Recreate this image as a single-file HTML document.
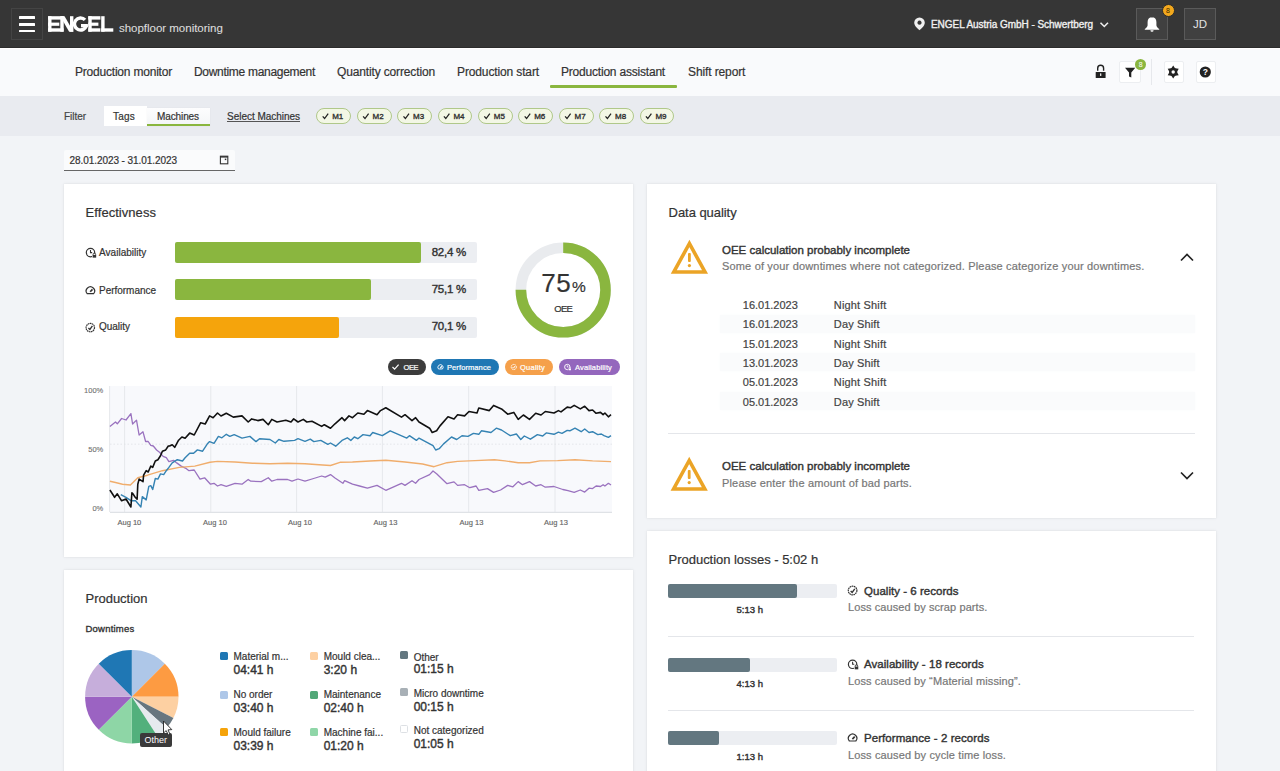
<!DOCTYPE html>
<html><head><meta charset="utf-8"><style>
html,body{margin:0;padding:0;width:1280px;height:771px;overflow:hidden;background:#f2f4f7;}
body{position:relative;font-family:'Liberation Sans', sans-serif;}
.t{position:absolute;white-space:nowrap;font-family:'Liberation Sans', sans-serif;}
</style></head><body>
<div style="position:absolute;left:0px;top:0px;width:1280px;height:48px;background:#363636"></div>
<div style="position:absolute;left:0px;top:47px;width:1280px;height:1px;background:#2c2c2c"></div>
<div style="position:absolute;left:0px;top:48px;width:1280px;height:1px;background:#ffffff"></div>
<div style="position:absolute;left:0px;top:49px;width:1280px;height:47px;background:#f9fafc"></div>
<div style="position:absolute;left:0px;top:96px;width:1280px;height:40px;background:#e9ebf0"></div>
<div style="position:absolute;left:11px;top:8px;width:32px;height:32px;box-sizing:border-box;border:1px solid #444;"></div>
<div style="position:absolute;left:18.5px;top:16px;width:16.5px;height:2.6px;background:#fff;border-radius:0.5px"></div>
<div style="position:absolute;left:18.5px;top:23px;width:16.5px;height:2.6px;background:#fff;border-radius:0.5px"></div>
<div style="position:absolute;left:18.5px;top:29.5px;width:16.5px;height:2.6px;background:#fff;border-radius:0.5px"></div>
<div style="position:absolute;left:1136px;top:8px;width:32px;height:32px;box-sizing:border-box;background:#404040;border:1px solid #5a5a5a;"></div>
<div style="position:absolute;left:1184px;top:8px;width:32px;height:32px;box-sizing:border-box;background:#404040;border:1px solid #5a5a5a;"></div>
<div style="position:absolute;left:1161.5px;top:4.3px;width:13px;height:13px;box-sizing:border-box;border-radius:50%;background:#f2a81d;border:1.2px solid #2b2b2b"></div>
<div style="position:absolute;left:550px;top:85.4px;width:126.5px;height:2.3px;background:#8ab63f;border-radius:1px"></div>
<div style="position:absolute;left:1119px;top:61px;width:22px;height:21.5px;box-sizing:border-box;background:#fff;border:1px solid #eceef1;border-radius:2px"></div>
<div style="position:absolute;left:1164px;top:61px;width:19.5px;height:21.5px;box-sizing:border-box;background:#fff;border:1px solid #eceef1;border-radius:2px"></div>
<div style="position:absolute;left:1196px;top:61px;width:19.5px;height:21.5px;box-sizing:border-box;background:#fff;border:1px solid #eceef1;border-radius:2px"></div>
<div style="position:absolute;left:1151px;top:59px;width:1px;height:26px;background:#e6e8ec"></div>
<div style="position:absolute;left:1135.1px;top:58.5px;width:11px;height:11px;border-radius:50%;background:#8ab63f;"></div>
<div style="position:absolute;left:103.5px;top:106px;width:43px;height:20px;background:#fff"></div>
<div style="position:absolute;left:146.5px;top:107.5px;width:63.5px;height:18.5px;background:linear-gradient(#fdfdfe,#f3f5f7);box-shadow:0 0 1px rgba(0,0,0,0.08)"></div>
<div style="position:absolute;left:147px;top:124px;width:63px;height:2px;background:#8ab63f"></div>
<div style="position:absolute;left:227px;top:121.3px;width:73px;height:1.2px;background:#555"></div>
<div style="position:absolute;left:316.4px;top:108.3px;width:34.8px;height:15.3px;box-sizing:border-box;border:1px solid #b0c88a;background:#f3f7e5;border-radius:8px"></div>
<div style="position:absolute;left:356.79999999999995px;top:108.3px;width:34.8px;height:15.3px;box-sizing:border-box;border:1px solid #b0c88a;background:#f3f7e5;border-radius:8px"></div>
<div style="position:absolute;left:397.2px;top:108.3px;width:34.8px;height:15.3px;box-sizing:border-box;border:1px solid #b0c88a;background:#f3f7e5;border-radius:8px"></div>
<div style="position:absolute;left:437.59999999999997px;top:108.3px;width:34.8px;height:15.3px;box-sizing:border-box;border:1px solid #b0c88a;background:#f3f7e5;border-radius:8px"></div>
<div style="position:absolute;left:478.0px;top:108.3px;width:34.8px;height:15.3px;box-sizing:border-box;border:1px solid #b0c88a;background:#f3f7e5;border-radius:8px"></div>
<div style="position:absolute;left:518.4px;top:108.3px;width:34.8px;height:15.3px;box-sizing:border-box;border:1px solid #b0c88a;background:#f3f7e5;border-radius:8px"></div>
<div style="position:absolute;left:558.8px;top:108.3px;width:34.8px;height:15.3px;box-sizing:border-box;border:1px solid #b0c88a;background:#f3f7e5;border-radius:8px"></div>
<div style="position:absolute;left:599.2px;top:108.3px;width:34.8px;height:15.3px;box-sizing:border-box;border:1px solid #b0c88a;background:#f3f7e5;border-radius:8px"></div>
<div style="position:absolute;left:639.5999999999999px;top:108.3px;width:34.8px;height:15.3px;box-sizing:border-box;border:1px solid #b0c88a;background:#f3f7e5;border-radius:8px"></div>
<div style="position:absolute;left:64px;top:150px;width:170.5px;height:20px;background:#fafbfc;border-radius:2px 2px 0 0"></div>
<div style="position:absolute;left:64px;top:169.5px;width:170.5px;height:1.1px;background:#666"></div>
<div style="position:absolute;left:64px;top:184px;width:569px;height:373px;background:#fff;box-shadow:0 0 0 0.5px rgba(0,0,0,0.03), 0 0 4px rgba(0,0,0,0.06);"></div>
<div style="position:absolute;left:647px;top:184px;width:569px;height:334px;background:#fff;box-shadow:0 0 0 0.5px rgba(0,0,0,0.03), 0 0 4px rgba(0,0,0,0.06);"></div>
<div style="position:absolute;left:64px;top:570px;width:569px;height:220px;background:#fff;box-shadow:0 0 0 0.5px rgba(0,0,0,0.03), 0 0 4px rgba(0,0,0,0.06);"></div>
<div style="position:absolute;left:647px;top:531px;width:569px;height:260px;background:#fff;box-shadow:0 0 0 0.5px rgba(0,0,0,0.03), 0 0 4px rgba(0,0,0,0.06);"></div>
<div style="position:absolute;left:175px;top:242px;width:302px;height:21px;background:#eceef2;border-radius:2px"></div>
<div style="position:absolute;left:175px;top:242px;width:246.3px;height:21px;background:#8ab63f;border-radius:2px"></div>
<div style="position:absolute;left:175px;top:279.3px;width:302px;height:21px;background:#eceef2;border-radius:2px"></div>
<div style="position:absolute;left:175px;top:279.3px;width:196px;height:21px;background:#8ab63f;border-radius:2px"></div>
<div style="position:absolute;left:175px;top:317px;width:302px;height:21px;background:#eceef2;border-radius:2px"></div>
<div style="position:absolute;left:175px;top:317px;width:163.5px;height:21px;background:#f5a40c;border-radius:2px"></div>
<div style="position:absolute;left:387.8px;top:359px;width:38.19999999999999px;height:16px;background:#3c3c3c;border-radius:8px"></div>
<div style="position:absolute;left:431px;top:359px;width:68.30000000000001px;height:16px;background:#1f77b4;border-radius:8px"></div>
<div style="position:absolute;left:504.5px;top:359px;width:48.5px;height:16px;background:#f5a04a;border-radius:8px"></div>
<div style="position:absolute;left:558.5px;top:359px;width:61.5px;height:16px;background:#9467bd;border-radius:8px"></div>
<div style="position:absolute;left:720px;top:314.5px;width:475px;height:18px;background:#fafbfc;box-shadow:0 0 3px #fafbfc"></div>
<div style="position:absolute;left:720px;top:353.2px;width:475px;height:18px;background:#fafbfc;box-shadow:0 0 3px #fafbfc"></div>
<div style="position:absolute;left:720px;top:391.9px;width:475px;height:18px;background:#fafbfc;box-shadow:0 0 3px #fafbfc"></div>
<div style="position:absolute;left:668px;top:432.5px;width:527px;height:1px;background:#e4e6ea"></div>
<div style="position:absolute;left:668px;top:584px;width:168.5px;height:14px;background:#eceef2;border-radius:2px"></div>
<div style="position:absolute;left:668px;top:584px;width:129.2px;height:14px;background:#637780;border-radius:2px"></div>
<div style="position:absolute;left:668px;top:657.5px;width:168.5px;height:14px;background:#eceef2;border-radius:2px"></div>
<div style="position:absolute;left:668px;top:657.5px;width:82px;height:14px;background:#637780;border-radius:2px"></div>
<div style="position:absolute;left:668px;top:731px;width:168.5px;height:14px;background:#eceef2;border-radius:2px"></div>
<div style="position:absolute;left:668px;top:731px;width:50.5px;height:14px;background:#637780;border-radius:2px"></div>
<div style="position:absolute;left:668px;top:636px;width:526px;height:1px;background:#e4e6ea"></div>
<div style="position:absolute;left:668px;top:710px;width:526px;height:1px;background:#e4e6ea"></div>
<div style="position:absolute;left:220px;top:652px;width:8px;height:8px;background:#1f77b4;border-radius:1.5px;"></div>
<div style="position:absolute;left:220px;top:690.5px;width:8px;height:8px;background:#aec7e8;border-radius:1.5px;"></div>
<div style="position:absolute;left:220px;top:728.4px;width:8px;height:8px;background:#f5a30a;border-radius:1.5px;"></div>
<div style="position:absolute;left:310px;top:652px;width:8px;height:8px;background:#fdd0a2;border-radius:1.5px;"></div>
<div style="position:absolute;left:310px;top:690.5px;width:8px;height:8px;background:#52a878;border-radius:1.5px;"></div>
<div style="position:absolute;left:310px;top:728.4px;width:8px;height:8px;background:#8fd6a8;border-radius:1.5px;"></div>
<div style="position:absolute;left:400px;top:651px;width:8px;height:8px;background:#637780;border-radius:1.5px;"></div>
<div style="position:absolute;left:400px;top:688px;width:8px;height:8px;background:#a8b0b6;border-radius:1.5px;"></div>
<div style="position:absolute;left:400px;top:725px;width:8px;height:8px;background:#fff;border-radius:1.5px;box-sizing:border-box;border:1px solid #dde0e4;"></div>
<svg width="1280" height="771" style="position:absolute;left:0;top:0"><circle cx="563.2" cy="290" r="42.3" fill="none" stroke="#e9ebee" stroke-width="10.6"/><circle cx="563.2" cy="290" r="42.3" fill="none" stroke="#8ab63f" stroke-width="10.6" stroke-dasharray="199.33 265.78" transform="rotate(-90 563.2 290)"/><path d="M131.8,696.8 L131.80,650.10 A46.7,46.7 0 0 1 164.82,663.78 Z" fill="#aec7e8"/><path d="M131.8,696.8 L164.82,663.78 A46.7,46.7 0 0 1 178.50,696.80 Z" fill="#fd9b42"/><path d="M131.8,696.8 L178.50,696.80 A46.7,46.7 0 0 1 173.41,718.00 Z" fill="#fdd0a2"/><path d="M131.8,696.8 L173.41,718.00 A46.7,46.7 0 0 1 166.50,728.05 Z" fill="#68767f"/><path d="M131.8,696.8 L166.50,728.05 A46.7,46.7 0 0 1 157.23,735.97 Z" fill="#e6eaee"/><path d="M131.8,696.8 L157.23,735.97 A46.7,46.7 0 0 1 131.80,743.50 Z" fill="#52b07c"/><path d="M131.8,696.8 L131.80,743.50 A46.7,46.7 0 0 1 98.78,729.82 Z" fill="#8ed6a6"/><path d="M131.8,696.8 L98.78,729.82 A46.7,46.7 0 0 1 85.10,696.80 Z" fill="#9b63c2"/><path d="M131.8,696.8 L85.10,696.80 A46.7,46.7 0 0 1 98.78,663.78 Z" fill="#c6aedb"/><path d="M131.8,696.8 L98.78,663.78 A46.7,46.7 0 0 1 131.80,650.10 Z" fill="#1f77b4"/><rect x="110" y="386" width="502" height="126" fill="#f8f9fc"/><line x1="124.6" y1="386" x2="124.6" y2="512" stroke="#e6e8ec" stroke-width="1"/><line x1="210.8" y1="386" x2="210.8" y2="512" stroke="#e6e8ec" stroke-width="1"/><line x1="296.6" y1="386" x2="296.6" y2="512" stroke="#e6e8ec" stroke-width="1"/><line x1="382.4" y1="386" x2="382.4" y2="512" stroke="#e6e8ec" stroke-width="1"/><line x1="468.7" y1="386" x2="468.7" y2="512" stroke="#e6e8ec" stroke-width="1"/><line x1="555" y1="386" x2="555" y2="512" stroke="#e6e8ec" stroke-width="1"/><line x1="110" y1="444.2" x2="612" y2="444.2" stroke="#dfe2e6" stroke-width="0.8" stroke-dasharray="1.5 2"/><line x1="110" y1="512.3" x2="612" y2="512.3" stroke="#dfe2e6" stroke-width="1.2"/><line x1="109.6" y1="386" x2="109.6" y2="512" stroke="#e6e8ec" stroke-width="1"/><path d="M109.9,426.4 L115.5,422.0 L117.3,423.8 L121.6,418.5 L126.0,420.0 L130.9,413.6 L132.6,424.0 L136.5,420.1 L139.1,435.0 L143.0,431.8 L145.6,441.5 L148.2,441.5 L150.8,445.4 L153.3,446.0 L156.6,450.0 L159.8,452.5 L163.1,456.4 L166.3,457.7 L168.9,461.6 L173.5,460.3 L176.7,462.9 L181.2,466.1 L186.4,468.7 L189.0,470.7 L194.2,470.0 L200.0,479.1 L204.6,477.8 L210.5,484.2 L214.0,483.3 L217.5,486.0 L221.0,484.7 L226.3,486.3 L235.0,483.3 L242.0,484.2 L248.2,479.5 L250.8,481.2 L261.3,481.6 L268.3,477.7 L271.8,481.2 L277.0,479.5 L287.6,479.5 L292.0,481.2 L298.0,479.0 L305.0,481.2 L312.0,479.0 L321.7,476.0 L325.2,477.2 L330.5,474.6 L335.0,478.0 L342.9,483.3 L344.6,480.7 L352.5,484.2 L359.5,486.0 L367.4,488.2 L377.0,485.4 L385.8,490.3 L401.5,483.3 L405.0,485.4 L412.0,480.7 L415.6,483.3 L419.0,479.5 L429.6,474.6 L433.0,471.0 L436.6,473.7 L447.0,483.7 L454.0,481.9 L457.6,485.4 L464.6,484.7 L469.8,487.7 L476.1,486.0 L478.8,490.3 L487.5,488.6 L493.6,492.4 L500.6,490.0 L507.7,485.4 L512.9,486.8 L518.2,481.6 L522.5,484.7 L529.5,481.6 L535.7,486.0 L541.0,484.7 L545.3,487.2 L554.0,486.5 L562.8,489.5 L568.0,490.7 L574.2,492.4 L580.3,490.0 L584.7,492.1 L589.0,488.2 L592.6,488.6 L596.1,486.0 L600.5,486.5 L603.1,484.7 L604.9,486.0 L608.4,483.3 L611.0,485.0" fill="none" stroke="#9a72bf" stroke-width="1.3" stroke-linejoin="round"/><path d="M109.9,481.2 L115.5,482.5 L122.5,484.2 L130.4,485.0 L137.8,477.8 L147.5,475.2 L162.4,470.7 L179.3,467.4 L194.8,466.1 L210.0,462.3 L217.5,461.4 L235.0,462.0 L252.5,463.2 L270.0,463.7 L287.6,463.2 L305.0,463.7 L322.6,465.0 L330.5,465.5 L340.0,462.3 L352.5,462.0 L370.0,461.0 L385.8,460.2 L405.0,462.0 L422.6,464.0 L434.0,466.7 L447.0,462.7 L457.6,461.4 L475.0,460.6 L494.5,459.7 L505.0,460.9 L518.2,462.7 L529.5,462.7 L540.0,460.9 L557.6,460.6 L575.0,459.7 L592.6,460.9 L611.0,461.6" fill="none" stroke="#f0ad6c" stroke-width="1.4" stroke-linejoin="round"/><path d="M120.8,494.7 L126.0,497.3 L131.3,500.8 L135.6,500.8 L140.9,507.0 L142.3,496.6 L146.2,499.9 L148.8,486.3 L150.8,485.6 L152.7,489.5 L155.3,478.5 L157.9,479.1 L160.5,473.9 L163.7,474.6 L166.3,470.7 L168.9,467.4 L172.2,462.9 L177.3,459.7 L182.5,461.0 L185.1,457.7 L189.7,453.2 L193.6,453.2 L197.4,449.9 L202.6,451.2 L207.2,444.1 L209.6,441.6 L214.0,443.4 L218.4,436.4 L221.9,437.8 L226.3,434.3 L229.8,436.4 L234.2,434.6 L242.0,438.1 L249.9,436.4 L256.0,441.6 L259.5,438.7 L270.0,439.5 L275.3,443.0 L278.8,439.5 L284.0,441.3 L294.6,440.4 L298.0,438.7 L305.0,441.3 L310.3,439.2 L313.8,441.6 L320.8,440.4 L327.8,444.4 L330.5,443.0 L335.7,446.2 L342.0,440.4 L347.3,437.8 L350.8,440.4 L354.3,437.0 L357.8,438.7 L363.0,434.6 L370.0,435.7 L372.7,432.5 L382.3,435.7 L390.2,430.8 L406.8,438.1 L409.4,435.7 L416.4,440.4 L419.0,438.1 L433.0,445.7 L435.7,450.0 L439.2,448.7 L443.6,443.9 L451.5,437.0 L456.7,439.5 L462.0,435.7 L468.0,436.4 L473.4,433.4 L478.8,434.3 L481.4,430.8 L491.0,432.5 L496.3,428.2 L501.5,430.0 L510.3,435.7 L516.4,434.0 L520.8,439.5 L524.3,436.0 L530.4,439.2 L537.4,434.6 L542.7,436.0 L546.2,432.9 L554.0,434.3 L558.4,432.2 L562.0,433.4 L567.2,430.4 L569.8,430.8 L575.0,428.2 L581.2,431.7 L584.7,429.0 L589.0,432.5 L592.6,431.7 L597.8,434.6 L601.3,434.0 L604.0,435.7 L608.4,437.4 L611.0,435.7" fill="none" stroke="#3583b3" stroke-width="1.4" stroke-linejoin="round"/><path d="M109.9,490.0 L114.6,497.3 L117.3,493.8 L121.6,500.8 L126.0,499.0 L130.9,507.0 L131.9,492.7 L133.0,493.8 L135.0,497.0 L137.1,499.2 L137.8,484.3 L139.1,479.1 L143.0,481.7 L143.6,475.2 L146.2,470.7 L148.2,472.0 L150.8,466.1 L152.7,467.4 L155.3,461.0 L157.9,459.7 L160.5,455.8 L162.4,451.2 L165.7,449.9 L168.3,446.0 L169.6,446.0 L172.2,444.7 L174.7,447.3 L178.6,440.2 L181.9,437.0 L185.1,438.3 L189.7,433.1 L194.2,435.0 L200.7,422.7 L205.2,424.0 L209.6,415.9 L213.1,417.7 L217.5,413.0 L221.0,416.0 L226.3,413.3 L233.3,417.1 L242.0,415.9 L248.2,422.0 L251.7,418.9 L257.8,420.6 L263.0,419.4 L268.3,424.7 L271.8,419.4 L277.0,422.0 L285.8,420.3 L291.0,422.0 L293.7,418.9 L298.0,422.0 L303.3,419.4 L306.8,422.0 L312.0,421.2 L321.7,426.4 L324.3,424.7 L330.5,428.2 L335.0,423.8 L342.0,417.7 L344.6,420.6 L349.0,415.9 L352.5,417.7 L357.8,413.0 L363.9,414.2 L367.4,410.6 L377.0,414.7 L380.5,410.6 L385.8,407.7 L401.5,417.1 L405.0,414.7 L412.0,420.6 L415.6,417.7 L419.0,422.0 L429.6,428.2 L432.2,432.5 L436.6,430.8 L440.0,425.9 L448.0,416.8 L454.0,418.9 L457.6,414.7 L464.6,415.9 L469.0,411.5 L477.0,413.0 L478.8,408.0 L489.3,410.6 L493.6,405.4 L501.5,408.9 L507.7,414.2 L513.8,412.4 L518.2,419.4 L523.4,415.0 L529.5,419.4 L535.7,413.3 L541.0,415.0 L545.3,411.5 L554.0,413.0 L558.4,410.6 L561.0,411.9 L567.2,407.1 L570.7,407.7 L574.2,405.4 L580.3,408.9 L584.7,406.3 L589.0,410.6 L592.6,410.0 L596.1,413.3 L600.5,412.4 L603.1,414.7 L604.9,413.0 L608.4,416.8 L611.0,414.7" fill="none" stroke="#111" stroke-width="1.6" stroke-linejoin="round"/></svg>
<svg width="1280" height="771" style="position:absolute;left:0;top:0">
<!-- ENGEL logo -->
<g fill="#fff">
<rect x="48.1" y="16.2" width="3.4" height="15.5"/>
<rect x="48.1" y="16.2" width="15.5" height="3.4"/>
<rect x="48.1" y="22.6" width="11.2" height="3.2"/>
<rect x="48.1" y="28.3" width="15.5" height="3.4"/>
<rect x="60.3" y="16.2" width="3.4" height="15.5"/>
<path d="M60.3,16.2 L64.6,16.2 L73.4,31.7 L69.1,31.7 Z"/>
<rect x="70" y="16.2" width="3.4" height="15.5"/>
<rect x="81" y="24" width="6.9" height="3.3"/>
<rect x="88.3" y="16.2" width="3.4" height="15.5"/>
<rect x="88.3" y="16.2" width="12.1" height="3.4"/>
<rect x="88.3" y="22.6" width="10.1" height="3.2"/>
<rect x="88.3" y="28.3" width="12.1" height="3.4"/>
<rect x="101.2" y="16.2" width="3.4" height="15.5"/>
<rect x="101.2" y="28.3" width="12.1" height="3.4"/>
</g>
<path d="M86.42,25.26 A6.05,6.05 0 1 1 85.00,19.95" fill="none" stroke="#fff" stroke-width="3.4"/>
<!-- location pin -->
<path d="M919.5,17.5 a5.3,5.3 0 0 1 5.3,5.3 c0,3.6 -5.3,7.5 -5.3,7.5 c0,0 -5.3,-3.9 -5.3,-7.5 a5.3,5.3 0 0 1 5.3,-5.3 z M919.5,20.6 a2.1,2.1 0 1 0 0.01,0 z" fill="#f0f0f0" fill-rule="evenodd"/>
<!-- chevron down header -->
<path d="M1100.5,22.8 L1104.3,26.5 L1108,22.8" fill="none" stroke="#eee" stroke-width="1.6"/>
<!-- bell -->
<path d="M1152,17 c-2.8,0 -4.4,2.2 -4.4,5 v3.2 c0,1.5 -1.4,2.7 -2.8,3.7 v0.8 h14.4 v-0.8 c-1.4,-1 -2.8,-2.2 -2.8,-3.7 v-3.2 c0,-2.8 -1.6,-5 -4.4,-5 z M1150.4,30.2 h3.2 a1.6,1.6 0 0 1 -3.2,0 z" fill="#fff"/>
<!-- lock -->
<path d="M1097.7,70.8 v-2.6 a2.95,2.95 0 0 1 5.9,0 v2.6" fill="none" stroke="#222" stroke-width="1.4"/>
<rect x="1095.7" y="72" width="9.9" height="5.9" rx="0.5" fill="#222"/>
<rect x="1100.1" y="73.3" width="1.2" height="2.6" rx="0.5" fill="#fff"/>
<!-- funnel -->
<path d="M1125,67.8 h10.3 l-4,4.6 v5.2 l-2.3,-1.2 v-4 z" fill="#222"/>
<!-- gear -->
<g transform="translate(1173.2,72) scale(1.15)">
<path d="M0,-5.6 L1.6,-3.2 L4.8,-2.8 L3.2,0 L4.8,2.8 L1.6,3.2 L0,5.6 L-1.6,3.2 L-4.8,2.8 L-3.2,0 L-4.8,-2.8 L-1.6,-3.2 Z" fill="#222"/>
<circle r="3.5" fill="#222"/><circle r="1.5" fill="#fff"/>
</g>
<!-- help -->
<circle cx="1205.3" cy="72" r="5.6" fill="#222"/>
<text x="1205.3" y="75.3" font-family="Liberation Sans" font-weight="bold" font-size="8.5" fill="#fff" text-anchor="middle">?</text>
<!-- badges text -->
<text x="1168" y="13.3" font-family="Liberation Sans" font-size="7" fill="#3a2a00" text-anchor="middle">8</text>
<text x="1140.6" y="66.5" font-family="Liberation Sans" font-size="7" fill="#fff" text-anchor="middle">8</text>
<!-- calendar icon -->
<rect x="220.4" y="156.2" width="7.4" height="7.6" fill="none" stroke="#333" stroke-width="1.1"/>
<rect x="220.4" y="156.2" width="7.4" height="1.4" fill="#333"/>
<rect x="224.8" y="158.6" width="1.5" height="1.5" fill="#333"/>
<!-- chip checks -->
<g id="chips"><path d="M322.7,116.3 L324.6,118.5 L328.2,113.6" fill="none" stroke="#222" stroke-width="1.25"/><text x="332.2" y="118.9" font-family="Liberation Sans" font-size="8" fill="#333" stroke="#333" stroke-width="0.35">M1</text><path d="M363.1,116.3 L365.0,118.5 L368.6,113.6" fill="none" stroke="#222" stroke-width="1.25"/><text x="372.6" y="118.9" font-family="Liberation Sans" font-size="8" fill="#333" stroke="#333" stroke-width="0.35">M2</text><path d="M403.5,116.3 L405.4,118.5 L409.0,113.6" fill="none" stroke="#222" stroke-width="1.25"/><text x="413.0" y="118.9" font-family="Liberation Sans" font-size="8" fill="#333" stroke="#333" stroke-width="0.35">M3</text><path d="M443.9,116.3 L445.8,118.5 L449.4,113.6" fill="none" stroke="#222" stroke-width="1.25"/><text x="453.4" y="118.9" font-family="Liberation Sans" font-size="8" fill="#333" stroke="#333" stroke-width="0.35">M4</text><path d="M484.3,116.3 L486.2,118.5 L489.8,113.6" fill="none" stroke="#222" stroke-width="1.25"/><text x="493.8" y="118.9" font-family="Liberation Sans" font-size="8" fill="#333" stroke="#333" stroke-width="0.35">M5</text><path d="M524.7,116.3 L526.6,118.5 L530.2,113.6" fill="none" stroke="#222" stroke-width="1.25"/><text x="534.2" y="118.9" font-family="Liberation Sans" font-size="8" fill="#333" stroke="#333" stroke-width="0.35">M6</text><path d="M565.1,116.3 L567.0,118.5 L570.6,113.6" fill="none" stroke="#222" stroke-width="1.25"/><text x="574.6" y="118.9" font-family="Liberation Sans" font-size="8" fill="#333" stroke="#333" stroke-width="0.35">M7</text><path d="M605.5,116.3 L607.4,118.5 L611.0,113.6" fill="none" stroke="#222" stroke-width="1.25"/><text x="615.0" y="118.9" font-family="Liberation Sans" font-size="8" fill="#333" stroke="#333" stroke-width="0.35">M8</text><path d="M645.9,116.3 L647.8,118.5 L651.4,113.6" fill="none" stroke="#222" stroke-width="1.25"/><text x="655.4" y="118.9" font-family="Liberation Sans" font-size="8" fill="#333" stroke="#333" stroke-width="0.35">M9</text><circle cx="90.5" cy="252.6" r="4.2" fill="none" stroke="#333" stroke-width="1.2"/><path d="M90.5,250.08 V252.60 H92.18" fill="none" stroke="#333" stroke-width="1.08"/><rect x="91.97" y="253.65" width="4.62" height="4.20" fill="#fff"/><rect x="92.60" y="254.91" width="3.57" height="2.73" fill="#333"/><path d="M93.10,255.12 v-0.84 a1.26,1.26 0 0 1 2.52,0 v0.84" fill="none" stroke="#333" stroke-width="0.84"/><path d="M87.18,293.70 A4.2,4.2 0 1 1 93.62,293.70 Z" fill="none" stroke="#333" stroke-width="1.2"/><path d="M90.20,291.80 L92.50,289.32" stroke="#333" stroke-width="1.68"/><circle cx="90.3" cy="327.6" r="4.2" fill="none" stroke="#333" stroke-width="1.2" stroke-dasharray="1.6 0.5"/><path d="M88.41,328.02 L89.88,329.49 L92.40,325.92" fill="none" stroke="#333" stroke-width="1.32"/><path d="M392.5,367 L394.6,369.2 L398.6,364.6" fill="none" stroke="#fff" stroke-width="1.2"/><path d="M438.51,368.97 A2.6,2.6 0 1 1 442.49,368.97 Z" fill="none" stroke="#fff" stroke-width="0.9"/><path d="M440.30,368.10 L441.80,366.26" stroke="#fff" stroke-width="1.26"/><circle cx="513.8" cy="367" r="2.6" fill="none" stroke="#fff" stroke-width="0.9" stroke-dasharray="1.6 0.5"/><path d="M512.63,367.26 L513.54,368.17 L515.10,365.96" fill="none" stroke="#fff" stroke-width="0.9900000000000001"/><circle cx="567.3" cy="367" r="2.7" fill="none" stroke="#fff" stroke-width="0.9"/><path d="M567.3,365.38 V367.00 H568.38" fill="none" stroke="#fff" stroke-width="0.81"/><rect x="568.25" y="367.68" width="2.97" height="2.70" fill="#9467bd"/><rect x="568.65" y="368.49" width="2.29" height="1.76" fill="#fff"/><path d="M568.97,368.62 v-0.54 a0.81,0.81 0 0 1 1.62,0 v0.54" fill="none" stroke="#fff" stroke-width="0.63"/><circle cx="852.6" cy="590.5" r="4.3" fill="none" stroke="#333" stroke-width="1.2" stroke-dasharray="1.6 0.5"/><path d="M850.67,590.93 L852.17,592.43 L854.75,588.78" fill="none" stroke="#333" stroke-width="1.32"/><circle cx="852.6" cy="664.3" r="4.2" fill="none" stroke="#333" stroke-width="1.2"/><path d="M852.6,661.78 V664.30 H854.28" fill="none" stroke="#333" stroke-width="1.08"/><rect x="854.07" y="665.35" width="4.62" height="4.20" fill="#fff"/><rect x="854.70" y="666.61" width="3.57" height="2.73" fill="#333"/><path d="M855.20,666.82 v-0.84 a1.26,1.26 0 0 1 2.52,0 v0.84" fill="none" stroke="#333" stroke-width="0.84"/><path d="M849.38,741.00 A4.2,4.2 0 1 1 855.82,741.00 Z" fill="none" stroke="#333" stroke-width="1.2"/><path d="M852.40,739.10 L854.70,736.62" stroke="#333" stroke-width="1.68"/></g>
<!-- warning triangles -->
<g fill="none" stroke="#eba426" stroke-width="3.6" stroke-linejoin="miter">
<path d="M689.4,243.5 L673.8,272 L705,272 Z"/>
<path d="M689.2,460.5 L673.6,489 L704.8,489 Z"/>
</g>
<g fill="#eba426">
<rect x="688" y="253" width="2.8" height="9" rx="1"/><circle cx="689.4" cy="265.6" r="1.6"/>
<rect x="687.8" y="470" width="2.8" height="9" rx="1"/><circle cx="689.2" cy="482.6" r="1.6"/>
</g>
<!-- chevrons -->
<path d="M1181,260.5 L1187,254.5 L1193,260.5" fill="none" stroke="#222" stroke-width="1.7"/>
<path d="M1181,472.5 L1187,478.5 L1193,472.5" fill="none" stroke="#222" stroke-width="1.7"/>
</svg>

<div style="position:absolute;left:139.6px;top:732.8px;width:32.2px;height:14.2px;background:#3a3a3a;border-radius:2px"></div>
<div class="t" style="top:23.00px;font-size:11.5px;line-height:11.5px;color:#dcdcdc;font-weight:400;letter-spacing:-0.010px;left:118.90px;-webkit-text-stroke:0.1px #dcdcdc;">shopfloor monitoring</div>
<div class="t" style="top:20.00px;font-size:10px;line-height:10px;color:#f0f0f0;font-weight:400;letter-spacing:-0.049px;left:931.00px;-webkit-text-stroke:0.35px #f0f0f0;">ENGEL Austria GmbH - Schwertberg</div>
<div class="t" style="top:19.00px;font-size:11.5px;line-height:11.5px;color:#e2e2e2;font-weight:400;left:1192.97px;">JD</div>
<div class="t" style="top:66.00px;font-size:12px;line-height:12px;color:#333;font-weight:400;letter-spacing:-0.207px;left:75.00px;-webkit-text-stroke:0.2px #333;">Production monitor</div>
<div class="t" style="top:66.00px;font-size:12px;line-height:12px;color:#333;font-weight:400;letter-spacing:-0.302px;left:194.00px;-webkit-text-stroke:0.2px #333;">Downtime management</div>
<div class="t" style="top:66.00px;font-size:12px;line-height:12px;color:#333;font-weight:400;letter-spacing:-0.143px;left:337.00px;-webkit-text-stroke:0.2px #333;">Quantity correction</div>
<div class="t" style="top:66.00px;font-size:12px;line-height:12px;color:#333;font-weight:400;letter-spacing:-0.128px;left:457.00px;-webkit-text-stroke:0.2px #333;">Production start</div>
<div class="t" style="top:66.00px;font-size:12px;line-height:12px;color:#333;font-weight:400;letter-spacing:-0.203px;left:561.00px;-webkit-text-stroke:0.2px #333;">Production assistant</div>
<div class="t" style="top:66.00px;font-size:12px;line-height:12px;color:#333;font-weight:400;letter-spacing:-0.117px;left:688.00px;-webkit-text-stroke:0.2px #333;">Shift report</div>
<div class="t" style="top:112.00px;font-size:10px;line-height:10px;color:#444;font-weight:400;letter-spacing:-0.039px;left:64.00px;-webkit-text-stroke:0.2px #444;">Filter</div>
<div class="t" style="top:112.00px;font-size:10px;line-height:10px;color:#333;font-weight:400;letter-spacing:0.219px;left:113.00px;-webkit-text-stroke:0.2px #333;">Tags</div>
<div class="t" style="top:112.00px;font-size:10px;line-height:10px;color:#333;font-weight:400;letter-spacing:-0.102px;left:157.00px;-webkit-text-stroke:0.2px #333;">Machines</div>
<div class="t" style="top:112.00px;font-size:10px;line-height:10px;color:#333;font-weight:400;letter-spacing:-0.025px;left:227.00px;-webkit-text-stroke:0.2px #333;">Select Machines</div>
<div class="t" style="top:156.00px;font-size:10px;line-height:10px;color:#333;font-weight:400;letter-spacing:-0.065px;left:69.50px;-webkit-text-stroke:0.2px #333;">28.01.2023 - 31.01.2023</div>
<div class="t" style="top:206.00px;font-size:13px;line-height:13px;color:#333;font-weight:400;letter-spacing:0.045px;left:85.60px;-webkit-text-stroke:0.2px #333;">Effectivness</div>
<div class="t" style="top:248.00px;font-size:10px;line-height:10px;color:#333;font-weight:400;letter-spacing:0.028px;left:99.00px;-webkit-text-stroke:0.2px #333;">Availability</div>
<div class="t" style="top:286.00px;font-size:10px;line-height:10px;color:#333;font-weight:400;letter-spacing:-0.023px;left:99.00px;-webkit-text-stroke:0.2px #333;">Performance</div>
<div class="t" style="top:322.00px;font-size:10px;line-height:10px;color:#333;font-weight:400;letter-spacing:-0.018px;left:99.00px;-webkit-text-stroke:0.2px #333;">Quality</div>
<div class="t" style="top:247.00px;font-size:11.5px;line-height:11.5px;color:#333;font-weight:400;letter-spacing:-0.252px;left:431.70px;-webkit-text-stroke:0.4px #333;">82,4 %</div>
<div class="t" style="top:284.00px;font-size:11.5px;line-height:11.5px;color:#333;font-weight:400;letter-spacing:-0.252px;left:431.70px;-webkit-text-stroke:0.4px #333;">75,1 %</div>
<div class="t" style="top:321.00px;font-size:11.5px;line-height:11.5px;color:#333;font-weight:400;letter-spacing:-0.252px;left:431.70px;-webkit-text-stroke:0.4px #333;">70,1 %</div>
<div class="t" style="top:270.00px;font-size:26px;line-height:26px;color:#333;font-weight:400;letter-spacing:0.539px;left:541.30px;-webkit-text-stroke:0.2px #333;">75</div>
<div class="t" style="top:279.00px;font-size:15.5px;line-height:15.5px;color:#333;font-weight:400;left:572.00px;-webkit-text-stroke:0.2px #333;">%</div>
<div class="t" style="top:304.00px;font-size:9.5px;line-height:9.5px;color:#333;font-weight:400;letter-spacing:-0.754px;left:554.30px;-webkit-text-stroke:0.2px #333;">OEE</div>
<div class="t" style="top:387.00px;font-size:7.5px;line-height:7.5px;color:#707070;font-weight:400;left:84.11px;-webkit-text-stroke:0.1px #707070;">100%</div>
<div class="t" style="top:446.00px;font-size:7.5px;line-height:7.5px;color:#707070;font-weight:400;left:88.28px;-webkit-text-stroke:0.1px #707070;">50%</div>
<div class="t" style="top:505.00px;font-size:7.5px;line-height:7.5px;color:#707070;font-weight:400;left:92.46px;-webkit-text-stroke:0.1px #707070;">0%</div>
<div class="t" style="top:519.00px;font-size:7.5px;line-height:7.5px;color:#666;font-weight:400;left:117.51px;-webkit-text-stroke:0.15px #666;">Aug 10</div>
<div class="t" style="top:519.00px;font-size:7.5px;line-height:7.5px;color:#666;font-weight:400;left:203.11px;-webkit-text-stroke:0.15px #666;">Aug 10</div>
<div class="t" style="top:519.00px;font-size:7.5px;line-height:7.5px;color:#666;font-weight:400;left:288.11px;-webkit-text-stroke:0.15px #666;">Aug 10</div>
<div class="t" style="top:519.00px;font-size:7.5px;line-height:7.5px;color:#666;font-weight:400;left:373.61px;-webkit-text-stroke:0.15px #666;">Aug 13</div>
<div class="t" style="top:519.00px;font-size:7.5px;line-height:7.5px;color:#666;font-weight:400;left:459.61px;-webkit-text-stroke:0.15px #666;">Aug 13</div>
<div class="t" style="top:519.00px;font-size:7.5px;line-height:7.5px;color:#666;font-weight:400;left:544.11px;-webkit-text-stroke:0.15px #666;">Aug 13</div>
<div class="t" style="top:364.00px;font-size:7.5px;line-height:7.5px;color:#fff;font-weight:400;letter-spacing:-0.448px;left:403.50px;-webkit-text-stroke:0.2px #fff;">OEE</div>
<div class="t" style="top:364.00px;font-size:7.5px;line-height:7.5px;color:#fff;font-weight:400;letter-spacing:0.097px;left:447.00px;-webkit-text-stroke:0.2px #fff;">Performance</div>
<div class="t" style="top:364.00px;font-size:7.5px;line-height:7.5px;color:#fff;font-weight:400;letter-spacing:0.237px;left:520.00px;-webkit-text-stroke:0.2px #fff;">Quality</div>
<div class="t" style="top:364.00px;font-size:7.5px;line-height:7.5px;color:#fff;font-weight:400;letter-spacing:0.142px;left:575.00px;-webkit-text-stroke:0.2px #fff;">Availability</div>
<div class="t" style="top:206.00px;font-size:13px;line-height:13px;color:#333;font-weight:400;letter-spacing:-0.055px;left:668.60px;-webkit-text-stroke:0.2px #333;">Data quality</div>
<div class="t" style="top:245.00px;font-size:11.5px;line-height:11.5px;color:#333;font-weight:400;letter-spacing:0.002px;left:722.00px;-webkit-text-stroke:0.4px #333;">OEE calculation probably incomplete</div>
<div class="t" style="top:261.00px;font-size:11px;line-height:11px;color:#777;font-weight:400;letter-spacing:0.169px;left:722.00px;-webkit-text-stroke:0.2px #777;">Some of your downtimes where not categorized. Please categorize your downtimes.</div>
<div class="t" style="top:300.00px;font-size:11px;line-height:11px;color:#444;font-weight:400;letter-spacing:-0.006px;left:742.80px;-webkit-text-stroke:0.2px #444;">16.01.2023</div>
<div class="t" style="top:300.00px;font-size:11px;line-height:11px;color:#444;font-weight:400;letter-spacing:0.168px;left:833.80px;-webkit-text-stroke:0.2px #444;">Night Shift</div>
<div class="t" style="top:319.00px;font-size:11px;line-height:11px;color:#444;font-weight:400;letter-spacing:-0.006px;left:742.80px;-webkit-text-stroke:0.2px #444;">16.01.2023</div>
<div class="t" style="top:319.00px;font-size:11px;line-height:11px;color:#444;font-weight:400;letter-spacing:0.151px;left:833.80px;-webkit-text-stroke:0.2px #444;">Day Shift</div>
<div class="t" style="top:339.00px;font-size:11px;line-height:11px;color:#444;font-weight:400;letter-spacing:-0.006px;left:742.80px;-webkit-text-stroke:0.2px #444;">15.01.2023</div>
<div class="t" style="top:339.00px;font-size:11px;line-height:11px;color:#444;font-weight:400;letter-spacing:0.168px;left:833.80px;-webkit-text-stroke:0.2px #444;">Night Shift</div>
<div class="t" style="top:358.00px;font-size:11px;line-height:11px;color:#444;font-weight:400;letter-spacing:-0.006px;left:742.80px;-webkit-text-stroke:0.2px #444;">13.01.2023</div>
<div class="t" style="top:358.00px;font-size:11px;line-height:11px;color:#444;font-weight:400;letter-spacing:0.151px;left:833.80px;-webkit-text-stroke:0.2px #444;">Day Shift</div>
<div class="t" style="top:377.00px;font-size:11px;line-height:11px;color:#444;font-weight:400;letter-spacing:-0.006px;left:742.80px;-webkit-text-stroke:0.2px #444;">05.01.2023</div>
<div class="t" style="top:377.00px;font-size:11px;line-height:11px;color:#444;font-weight:400;letter-spacing:0.168px;left:833.80px;-webkit-text-stroke:0.2px #444;">Night Shift</div>
<div class="t" style="top:397.00px;font-size:11px;line-height:11px;color:#444;font-weight:400;letter-spacing:-0.006px;left:742.80px;-webkit-text-stroke:0.2px #444;">05.01.2023</div>
<div class="t" style="top:397.00px;font-size:11px;line-height:11px;color:#444;font-weight:400;letter-spacing:0.151px;left:833.80px;-webkit-text-stroke:0.2px #444;">Day Shift</div>
<div class="t" style="top:461.00px;font-size:11.5px;line-height:11.5px;color:#333;font-weight:400;letter-spacing:0.002px;left:722.00px;-webkit-text-stroke:0.4px #333;">OEE calculation probably incomplete</div>
<div class="t" style="top:478.00px;font-size:11px;line-height:11px;color:#777;font-weight:400;letter-spacing:0.160px;left:722.00px;-webkit-text-stroke:0.2px #777;">Please enter the amount of bad parts.</div>
<div class="t" style="top:553.00px;font-size:13px;line-height:13px;color:#333;font-weight:400;letter-spacing:-0.031px;left:668.60px;-webkit-text-stroke:0.2px #333;">Production losses - 5:02 h</div>
<div class="t" style="top:586.00px;font-size:11.5px;line-height:11.5px;color:#333;font-weight:400;letter-spacing:0.029px;left:864.00px;-webkit-text-stroke:0.4px #333;">Quality - 6 records</div>
<div class="t" style="top:602.00px;font-size:11px;line-height:11px;color:#777;font-weight:400;letter-spacing:0.094px;left:848.00px;-webkit-text-stroke:0.2px #777;">Loss caused by scrap parts.</div>
<div class="t" style="top:605.00px;font-size:9.5px;line-height:9.5px;color:#333;font-weight:400;left:736.59px;-webkit-text-stroke:0.4px #333;">5:13 h</div>
<div class="t" style="top:659.00px;font-size:11.5px;line-height:11.5px;color:#333;font-weight:400;letter-spacing:0.041px;left:864.00px;-webkit-text-stroke:0.4px #333;">Availability - 18 records</div>
<div class="t" style="top:676.00px;font-size:11px;line-height:11px;color:#777;font-weight:400;letter-spacing:0.108px;left:848.00px;-webkit-text-stroke:0.2px #777;">Loss caused by “Material missing”.</div>
<div class="t" style="top:679.00px;font-size:9.5px;line-height:9.5px;color:#333;font-weight:400;left:736.59px;-webkit-text-stroke:0.4px #333;">4:13 h</div>
<div class="t" style="top:733.00px;font-size:11.5px;line-height:11.5px;color:#333;font-weight:400;letter-spacing:0.065px;left:864.00px;-webkit-text-stroke:0.4px #333;">Performance - 2 records</div>
<div class="t" style="top:750.00px;font-size:11px;line-height:11px;color:#777;font-weight:400;letter-spacing:0.127px;left:848.00px;-webkit-text-stroke:0.2px #777;">Loss caused by cycle time loss.</div>
<div class="t" style="top:752.00px;font-size:9.5px;line-height:9.5px;color:#333;font-weight:400;left:736.59px;-webkit-text-stroke:0.4px #333;">1:13 h</div>
<div class="t" style="top:592.00px;font-size:13px;line-height:13px;color:#333;font-weight:400;letter-spacing:-0.016px;left:85.50px;-webkit-text-stroke:0.2px #333;">Production</div>
<div class="t" style="top:624.00px;font-size:9.5px;line-height:9.5px;color:#333;font-weight:400;letter-spacing:0.222px;left:85.50px;-webkit-text-stroke:0.35px #333;">Downtimes</div>
<div class="t" style="top:652.00px;font-size:10px;line-height:10px;color:#333;font-weight:400;left:233.50px;-webkit-text-stroke:0.2px #333;">Material m...</div>
<div class="t" style="top:664.00px;font-size:12px;line-height:12px;color:#333;font-weight:400;left:233.50px;-webkit-text-stroke:0.4px #333;">04:41 h</div>
<div class="t" style="top:690.00px;font-size:10px;line-height:10px;color:#333;font-weight:400;left:233.50px;-webkit-text-stroke:0.2px #333;">No order</div>
<div class="t" style="top:702.00px;font-size:12px;line-height:12px;color:#333;font-weight:400;left:233.50px;-webkit-text-stroke:0.4px #333;">03:40 h</div>
<div class="t" style="top:728.00px;font-size:10px;line-height:10px;color:#333;font-weight:400;left:233.50px;-webkit-text-stroke:0.2px #333;">Mould failure</div>
<div class="t" style="top:740.00px;font-size:12px;line-height:12px;color:#333;font-weight:400;left:233.50px;-webkit-text-stroke:0.4px #333;">03:39 h</div>
<div class="t" style="top:652.00px;font-size:10px;line-height:10px;color:#333;font-weight:400;left:323.70px;-webkit-text-stroke:0.2px #333;">Mould clea...</div>
<div class="t" style="top:664.00px;font-size:12px;line-height:12px;color:#333;font-weight:400;left:323.70px;-webkit-text-stroke:0.4px #333;">3:20 h</div>
<div class="t" style="top:690.00px;font-size:10px;line-height:10px;color:#333;font-weight:400;left:323.70px;-webkit-text-stroke:0.2px #333;">Maintenance</div>
<div class="t" style="top:702.00px;font-size:12px;line-height:12px;color:#333;font-weight:400;left:323.70px;-webkit-text-stroke:0.4px #333;">02:40 h</div>
<div class="t" style="top:728.00px;font-size:10px;line-height:10px;color:#333;font-weight:400;left:323.70px;-webkit-text-stroke:0.2px #333;">Machine fai...</div>
<div class="t" style="top:740.00px;font-size:12px;line-height:12px;color:#333;font-weight:400;left:323.70px;-webkit-text-stroke:0.4px #333;">01:20 h</div>
<div class="t" style="top:653.00px;font-size:10px;line-height:10px;color:#333;font-weight:400;left:413.70px;-webkit-text-stroke:0.2px #333;">Other</div>
<div class="t" style="top:663.00px;font-size:12px;line-height:12px;color:#333;font-weight:400;left:413.70px;-webkit-text-stroke:0.4px #333;">01:15 h</div>
<div class="t" style="top:689.00px;font-size:10px;line-height:10px;color:#333;font-weight:400;left:413.70px;-webkit-text-stroke:0.2px #333;">Micro downtime</div>
<div class="t" style="top:701.00px;font-size:12px;line-height:12px;color:#333;font-weight:400;left:413.70px;-webkit-text-stroke:0.4px #333;">00:15 h</div>
<div class="t" style="top:726.00px;font-size:10px;line-height:10px;color:#333;font-weight:400;left:413.70px;-webkit-text-stroke:0.2px #333;">Not categorized</div>
<div class="t" style="top:738.00px;font-size:12px;line-height:12px;color:#333;font-weight:400;left:413.70px;-webkit-text-stroke:0.4px #333;">01:05 h</div>
<div class="t" style="top:736.00px;font-size:9px;line-height:9px;color:#fff;font-weight:400;left:144.44px;">Other</div>
<svg width="1280" height="771" style="position:absolute;left:0;top:0"><!-- mouse cursor -->
<path d="M163.5,721 L163.5,733 L166.2,730.6 L168.3,735 L170,734.2 L168,729.9 L171.8,729.6 Z" fill="#fff" stroke="#222" stroke-width="0.9" stroke-linejoin="round"/>
</svg>
</body></html>
